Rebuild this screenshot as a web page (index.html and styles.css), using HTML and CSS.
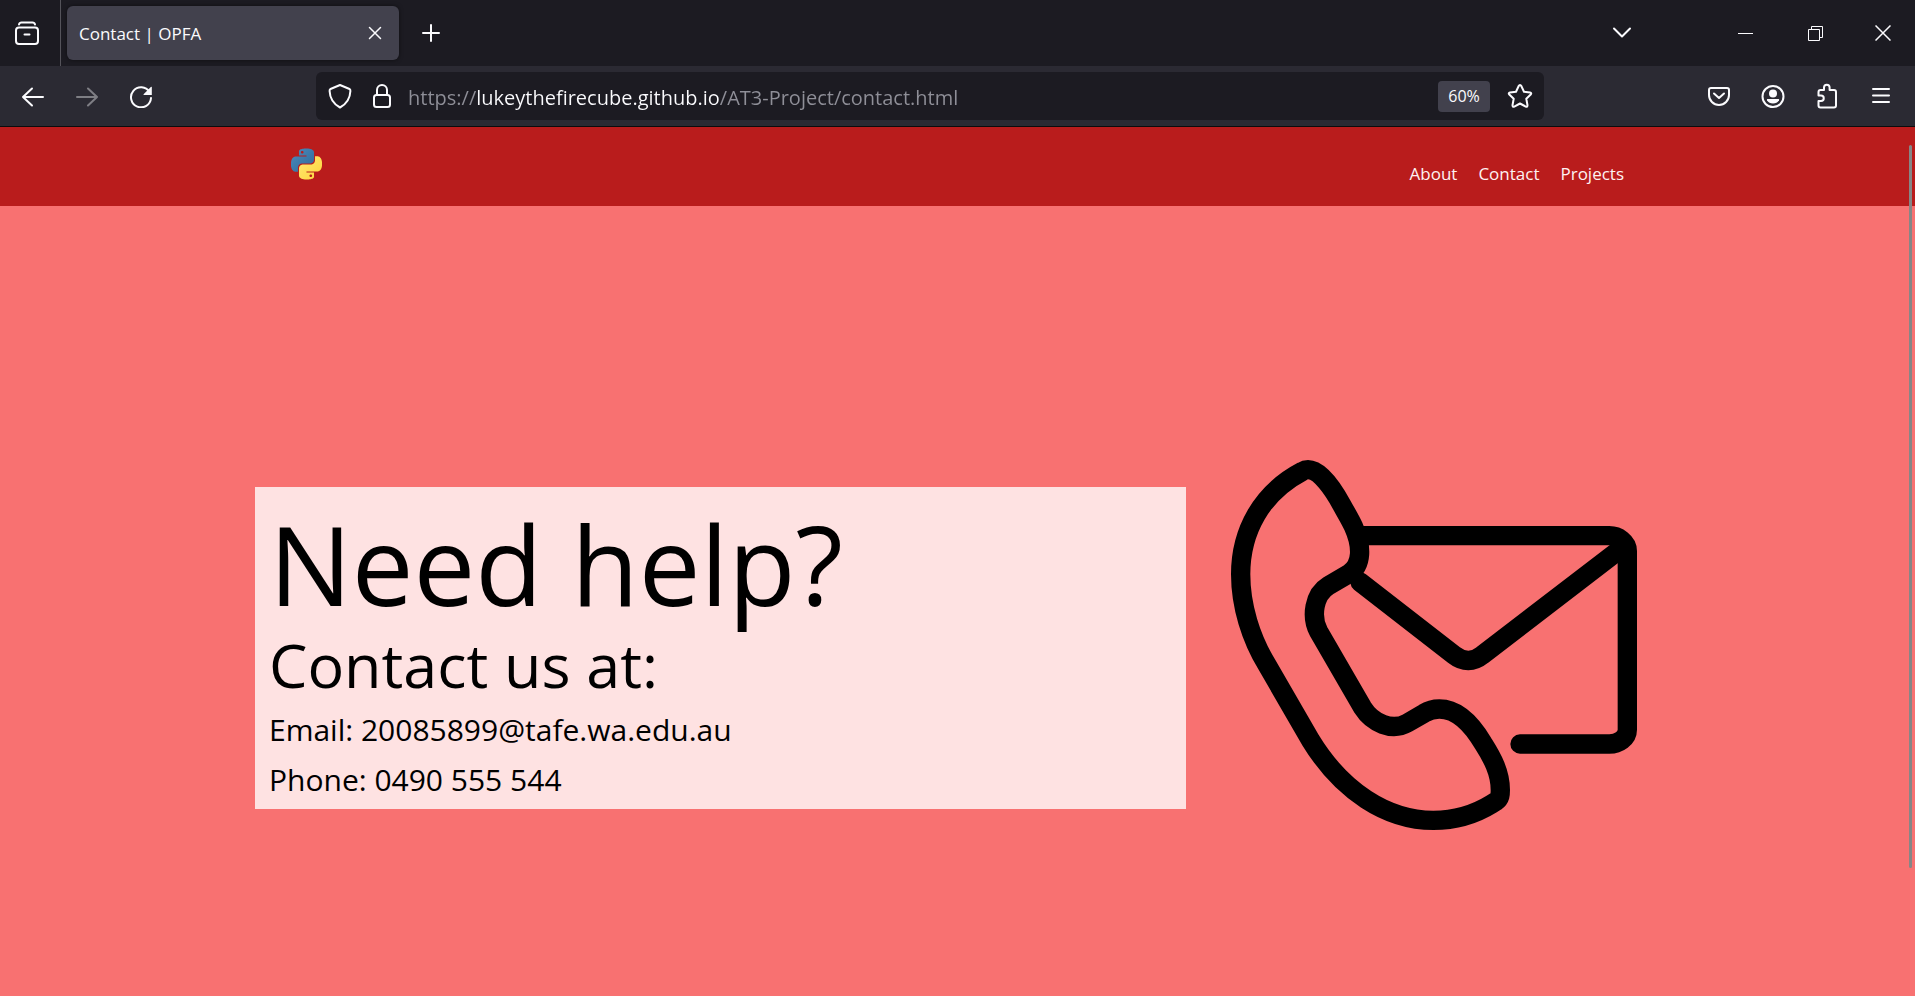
FILE: index.html
```html
<!DOCTYPE html>
<html lang="en">
<head>
<meta charset="utf-8">
<title>Contact | OPFA</title>
<link rel="stylesheet" href="styles.css">
</head>
<body>
<div class="browser">
  <header class="chrome">
    <div class="tabbar">
      <button class="btn firefox-view" aria-label="View recent browsing">
        <svg width="24" height="24" viewBox="0 0 24 24"><path d="M4 3.500Q4.500 1.500 6.500 1.500H17.500Q19.500 1.500 20 3.500"/><rect x="1" y="6.500" width="22" height="16.500" rx="3"/><path d="M9.500 13.500H14.500"/></svg>
      </button>
      <div class="tab">
        <span class="tab-title">Contact | OPFA</span>
        <button class="btn tab-close" aria-label="Close tab">
          <svg width="14" height="14" viewBox="0 0 14 14"><path d="M1.500 1.500L12.500 12.500M12.500 1.500L1.500 12.500"/></svg>
        </button>
      </div>
      <button class="btn new-tab" aria-label="New tab">
        <svg width="20" height="20" viewBox="0 0 20 20"><path d="M10 2V18M2 10H18"/></svg>
      </button>
      <button class="btn all-tabs" aria-label="List all tabs">
        <svg width="20" height="20" viewBox="0 0 20 20"><path d="M2 5.500L10 13.500L18 5.500"/></svg>
      </button>
      <div class="window-controls">
        <button class="btn win" aria-label="Minimize"><svg class="thin" width="15" height="15" viewBox="0 0 15 15"><path d="M0 7.500H15"/></svg></button>
        <button class="btn win" aria-label="Restore"><svg class="thin" width="15" height="15" viewBox="0 0 15 15"><path d="M.5 3.500H11.500V14.500H.5ZM3.500 3.500V.5H14.500V11.500H11.500"/></svg></button>
        <button class="btn win win-close" aria-label="Close"><svg class="thin" width="16" height="16" viewBox="0 0 16 16"><path d="M.5 .5L15.500 15.500M15.500 .5L.5 15.500"/></svg></button>
      </div>
    </div>
    <div class="toolbar">
      <div class="nav-buttons">
        <button class="btn tool" aria-label="Back"><svg width="24" height="24" viewBox="0 0 24 24"><path d="M22 13H2M11 4.500L2 13L11 21.500"/></svg></button>
        <button class="btn tool" aria-label="Forward" disabled><svg width="24" height="24" viewBox="0 0 24 24"><path d="M2 13H22M13 4.500L22 13L13 21.500"/></svg></button>
        <button class="btn tool" aria-label="Reload"><svg width="24" height="24" viewBox="0 0 24 24"><path d="M20.500 8A10 10 0 1 0 22 14"/><path class="solid" d="M22.800 3V11H15Q14 11 14.600 10.300L21.800 3Q22.500 2.300 22.800 3Z"/></svg></button>
      </div>
      <div class="urlbar">
        <button class="btn" aria-label="Tracking protection"><svg width="24" height="26" viewBox="0 0 24 26"><path d="M12 2L21.500 6Q22.500 6.500 22.400 8Q22 19 12 24.500Q2 19 1.600 8Q1.500 6.500 2.500 6Z"/></svg></button>
        <button class="btn" aria-label="Site information"><svg width="20" height="26" viewBox="0 0 20 26"><rect x="2" y="12" width="16" height="12" rx="2.500"/><path d="M5 12V7A5 5 0 0 1 15 7V12"/></svg></button>
        <input class="url" type="text" aria-label="Address" value="https://lukeythefirecube.github.io/AT3-Project/contact.html">
        <button class="zoom-level">60%</button>
        <button class="btn" aria-label="Bookmark this page"><svg width="26" height="26" viewBox="0 0 26 26"><path d="M13 2Q13.800 2 14.300 3L17 8.700L23 9.500Q25 10 23.700 11.500L19.300 15.800L20.500 22.300Q20.500 24.300 18.700 23.600L13 20.500L7.300 23.600Q5.500 24.300 5.500 22.300L6.700 15.800L2.300 11.500Q1 10 3 9.500L9 8.700L11.700 3Q12.200 2 13 2Z"/></svg></button>
      </div>
      <div class="tools">
        <button class="btn tool" aria-label="Save to Pocket"><svg width="24" height="24" viewBox="0 0 24 24"><path d="M4 4H20Q22 4 22 6V11A10 10 0 0 1 2 11V6Q2 4 4 4ZM7 9.500L12 14L17 9.500"/></svg></button>
        <button class="btn tool" aria-label="Account"><svg width="24" height="24" viewBox="0 0 24 24"><circle cx="12" cy="12.500" r="10.500"/><circle class="solid" cx="12" cy="9.500" r="4"/><path class="solid" d="M6.500 15H17.500Q18.500 15 18 16.200Q16 19.500 12 19.500T6 16.200Q5.500 15 6.500 15Z"/></svg></button>
        <button class="btn tool" aria-label="Extensions"><svg width="24" height="26" viewBox="0 0 24 26"><path d="M3.500 12.500V9Q3.500 7 5.500 7H9V4.500A2.800 2.800 0 0 1 14.600 4.500V7H19Q21 7 21 9V22.500Q21 24.500 19 24.500H5.500Q3.500 24.500 3.500 22.500V18H6A2.700 2.700 0 0 0 6 12.500Z"/></svg></button>
        <button class="btn tool" aria-label="Open application menu"><svg width="20" height="20" viewBox="0 0 20 20"><path d="M2 3H18M2 9.500H18M2 16H18"/></svg></button>
      </div>
    </div>
  </header>

  <div class="page">
    <nav class="site-nav">
      <div class="site-nav-inner">
        <a class="logo" href="#" aria-label="Home">
          <svg width="31" height="32" viewBox="0 0 24 24">
            <defs>
              <linearGradient id="blue" x1="0" y1="0" x2="1" y2="1"><stop offset="0" stop-color="#4b8bbe"/><stop offset="1" stop-color="#306998"/></linearGradient>
              <linearGradient id="yellow" x1="1" y1="1" x2="0" y2="0"><stop offset="0" stop-color="#ffe873"/><stop offset="1" stop-color="#ffd43b"/></linearGradient>
              <path id="snake" d="M14.25.18l.9.2.73.26.59.3.45.32.34.34.25.34.16.33.1.3.04.26.02.2-.01.13V8.500l-.05.63-.13.55-.21.46-.26.38-.3.31-.33.25-.35.19-.35.14-.33.1-.3.07-.26.04-.21.02H8.770l-.69.05-.59.14-.5.22-.41.27-.33.32-.27.35-.2.36-.15.37-.1.35-.07.32-.04.27-.02.21v3.060H3.170l-.21-.03-.28-.07-.32-.12-.35-.18-.36-.26-.36-.36-.35-.46-.32-.59-.28-.73-.21-.88-.14-1.050-.05-1.230.06-1.220.16-1.040.24-.87.32-.71.36-.57.4-.44.42-.33.42-.24.4-.16.36-.1.32-.05.24-.01h.16l.06.01h8.160v-.83H6.180l-.01-2.750-.02-.37.05-.34.11-.31.17-.28.25-.26.31-.23.38-.2.44-.18.51-.15.58-.12.64-.1.71-.06.77-.04.84-.02 1.270.05zm-6.300 1.980l-.23.33-.08.41.08.41.23.34.33.22.41.09.41-.09.33-.22.23-.34.08-.41-.08-.41-.23-.33-.33-.22-.41-.09-.41.09z"/>
            </defs>
            <use href="#snake" fill="url(#blue)"/>
            <use href="#snake" fill="url(#yellow)" transform="rotate(180 12 12)"/>
          </svg>
        </a>
        <div class="links">
          <a href="#">About</a>
          <a href="#">Contact</a>
          <a href="#">Projects</a>
        </div>
      </div>
    </nav>
    <main class="contact">
      <section class="card">
        <h1>Need help?</h1>
        <h2>Contact us at:</h2>
        <p>Email: 20085899@tafe.wa.edu.au</p>
        <p>Phone: 0490 555 544</p>
      </section>
      <svg class="art" viewBox="0 0 1320 1182" role="img" aria-label="Telephone and envelope">
        <path d="M247 61C125 125 62 240 62 370C62 465 93 562 140 640L272 868C365 1020 500 1108 640 1108C706 1108 765 1090 815 1059L828 1051C841 1042 841 1030 841 1017C841 965 818 922 790 878C750 810 706 774 658 774C641 774 625 779 612 787L562 816C515 842 457 816 428 770L296 542C272 497 282 430 325 404L387 368C427 342 427 286 400 226C390 204 379 187 366 163C340 115 300 56 264 56Q255 56 247 61Z"/>
        <path d="M425 254H1168C1194 254 1222 273 1222 300V836C1222 861 1196 879 1168 879H900"/>
        <path d="M420 393L702 612C730 634 760 634 787 612L1200 295"/>
      </svg>
    </main>
    <div class="scrollbar"></div>
  </div>
</div>
</body>
</html>
```
FILE: styles.css
```css
* { box-sizing: border-box; }

body {
  margin: 0;
  font-family: "Open Sans", "Noto Sans", sans-serif;
  color: #fbfbfe;
}

.browser {
  display: flex;
  flex-direction: column;
  min-height: 100vh;
}

button {
  margin: 0;
  padding: 0;
  border: 0;
  font: inherit;
  color: inherit;
  background: none;
}

.btn {
  display: flex;
  align-items: center;
  justify-content: center;
  flex: none;
}

.btn:disabled { opacity: 0.4; }

.btn svg {
  fill: none;
  stroke: #fbfbfe;
  stroke-width: 2;
  stroke-linecap: round;
  stroke-linejoin: round;
}

.btn svg.thin {
  stroke-width: 1;
  stroke-linecap: butt;
  stroke-linejoin: miter;
}

.btn .solid {
  fill: #fbfbfe;
  stroke: none;
}

/* Tab strip */
.tabbar {
  display: flex;
  align-items: center;
  height: 66px;
  background: #1c1b22;
}

.firefox-view {
  width: 61px;
  height: 66px;
  padding-right: 6px;
  border-right: 1px solid #54535a;
}

.tab {
  display: flex;
  align-items: center;
  justify-content: space-between;
  width: 332px;
  height: 54px;
  margin-left: 6px;
  padding: 0 17px 0 12px;
  border-radius: 6px;
  background: #42414d;
  box-shadow: 0 0 4px rgba(0, 0, 0, 0.5);
}

.tab-title { font-size: 17px; }

.btn.tab-close svg { stroke-width: 1.5; }

.new-tab {
  width: 40px;
  height: 40px;
  margin-left: 12px;
}

.all-tabs {
  width: 40px;
  height: 40px;
  margin-left: auto;
}

.window-controls {
  display: flex;
  gap: 2px;
  margin-left: 69px;
}

.win {
  width: 68px;
  height: 66px;
}

.win-close {
  width: 64px;
}

.btn.win-close svg { stroke-width: 1.5; }

/* Address row */
.toolbar {
  display: flex;
  align-items: center;
  height: 61px;
  border-bottom: 1px solid #0c0c0d;
  background: #2b2a33;
}

.nav-buttons {
  display: flex;
  gap: 6px;
  padding-left: 9px;
}

.tool {
  width: 48px;
  height: 48px;
}

.urlbar {
  display: flex;
  align-items: center;
  flex: 1;
  gap: 20px;
  height: 48px;
  margin: 0 151px 0 151px;
  padding: 0 11px 0 12px;
  border-radius: 6px;
  background: #1c1b22;
}

.url {
  flex: 1;
  min-width: 0;
  height: 40px;
  margin-left: -4px;
  padding: 2px 0 0;
  border: 0;
  outline: 0;
  font-family: inherit;
  font-size: 20px;
  color: transparent;
  background: linear-gradient(to right, #8f8f98 68px, #fbfbfe 68px, #fbfbfe 311px, #8f8f98 311px);
  -webkit-background-clip: text;
  background-clip: text;
}

.zoom-level {
  width: 52px;
  height: 31px;
  margin-right: -3px;
  border-radius: 4px;
  font-size: 16px;
  line-height: 31px;
  background: #42414d;
}

.tools {
  display: flex;
  gap: 6px;
  padding-right: 10px;
}

/* Web page */
.page {
  position: relative;
  flex: 1;
  background: #f87171;
}

.site-nav { background: #b91c1c; }

.site-nav-inner {
  display: flex;
  justify-content: space-between;
  max-width: 1333px;
  height: 79px;
  margin: 0 auto;
  padding-top: 21px;
}

.links {
  display: flex;
  gap: 21px;
  padding-top: 13px;
  font-size: 17px;
  line-height: 26px;
}

.links a {
  color: #fef2f2;
  text-decoration: none;
}

.contact {
  display: flex;
  align-items: center;
  gap: 34px;
  max-width: 1405px;
  margin: 0 auto;
  padding-top: 245px;
}

.card {
  flex: 1;
  padding: 14px 14px 4px;
  color: #000;
  background: #fee2e2;
}

.card h1, .card h2, .card p {
  margin: 0;
  font-weight: 400;
}

.card h1 {
  font-size: 110px;
  line-height: 124px;
}

.card h2 {
  font-size: 61px;
  line-height: 80px;
}

.card p {
  font-size: 30px;
  line-height: 50px;
}

.art {
  flex: none;
  width: 440px;
  fill: none;
  stroke: #000;
  stroke-width: 58;
  stroke-linecap: round;
  stroke-linejoin: round;
}

.scrollbar {
  position: absolute;
  top: 18px;
  right: 3px;
  width: 3px;
  height: 723px;
  border-radius: 2px;
  background: #868686;
}
```
